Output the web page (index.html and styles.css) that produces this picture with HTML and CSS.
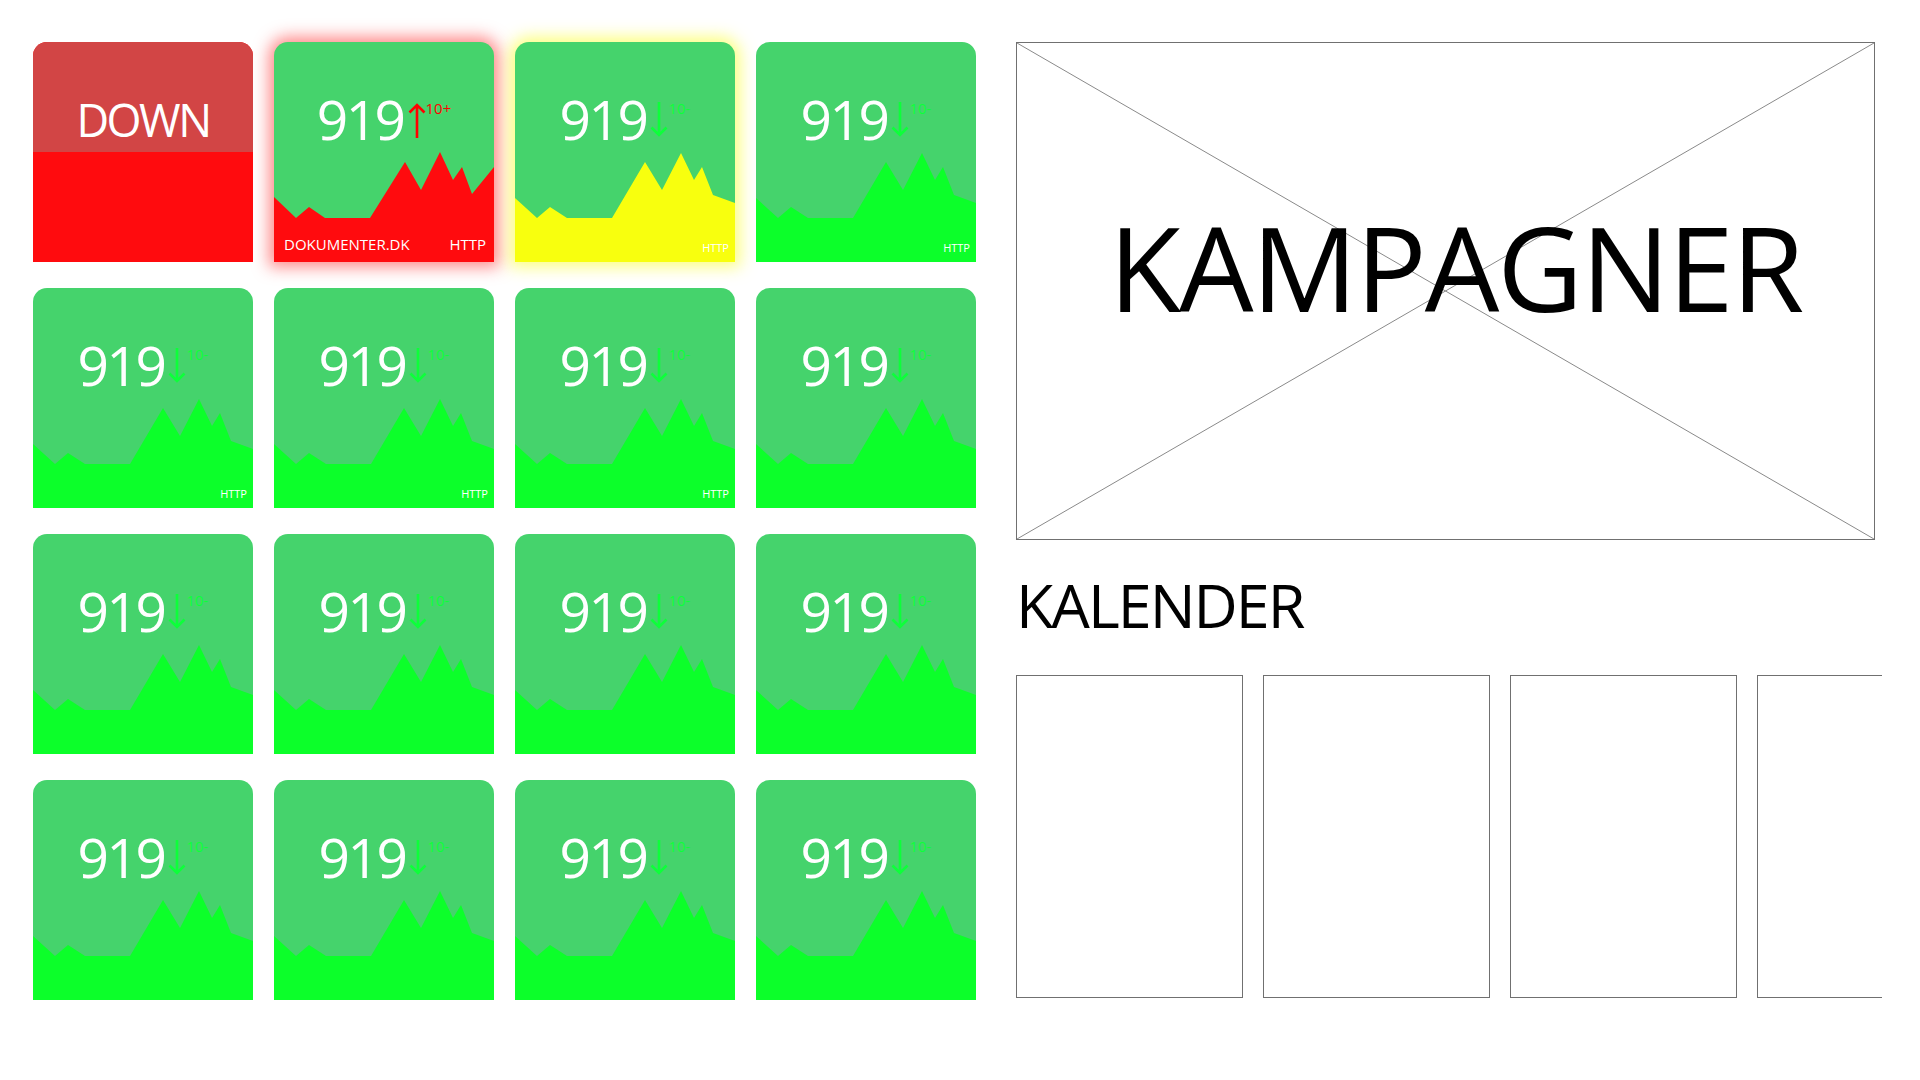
FILE: index.html
```html
<!DOCTYPE html>
<html lang="da">

<head>
    <meta charset="UTF-8" />
    <meta name="viewport" content="width=device-width, initial-scale=1.0" />
    <title>Status</title>
    <link rel="stylesheet" href="styles.css">
</head>

<body>

    <svg class="defs" width="0" height="0">
        <symbol id="arrow-up" viewBox="0 0 18 36">
            <path d="M9 3 V36 M1.5 10.5 L9 3 L16.5 10.5" fill="none" stroke="currentColor" stroke-width="2.6" />
        </symbol>
        <symbol id="arrow-down" viewBox="0 0 18 36">
            <path d="M9 0 V33 M1.5 25.5 L9 33 L16.5 25.5" fill="none" stroke="currentColor" stroke-width="2.6" />
        </symbol>
    </svg>

    <div class="dashboard">

        <div class="tiles">
            <div class="tile down">
                <div class="down-head">DOWN</div>
            </div>

            <div class="tile alert">
                <div class="chart spike"></div>
                <div class="value">
                    <span class="num">919</span>
                    <svg class="arrow"><use href="#arrow-up" /></svg>
                    <span class="delta">10+</span>
                </div>
                <div class="footer">
                    <span>DOKUMENTER.DK</span>
                    <span>HTTP</span>
                </div>
            </div>

            <div class="tile warn">
                <div class="chart"></div>
                <div class="value">
                    <span class="num">919</span>
                    <svg class="arrow"><use href="#arrow-down" /></svg>
                    <span class="delta">10-</span>
                </div>
                <span class="proto">HTTP</span>
            </div>

            <div class="tile">
                <div class="chart"></div>
                <div class="value">
                    <span class="num">919</span>
                    <svg class="arrow"><use href="#arrow-down" /></svg>
                    <span class="delta">10-</span>
                </div>
                <span class="proto">HTTP</span>
            </div>

            <div class="tile">
                <div class="chart"></div>
                <div class="value">
                    <span class="num">919</span>
                    <svg class="arrow"><use href="#arrow-down" /></svg>
                    <span class="delta">10-</span>
                </div>
                <span class="proto">HTTP</span>
            </div>

            <div class="tile">
                <div class="chart"></div>
                <div class="value">
                    <span class="num">919</span>
                    <svg class="arrow"><use href="#arrow-down" /></svg>
                    <span class="delta">10-</span>
                </div>
                <span class="proto">HTTP</span>
            </div>

            <div class="tile">
                <div class="chart"></div>
                <div class="value">
                    <span class="num">919</span>
                    <svg class="arrow"><use href="#arrow-down" /></svg>
                    <span class="delta">10-</span>
                </div>
                <span class="proto">HTTP</span>
            </div>

            <div class="tile">
                <div class="chart"></div>
                <div class="value">
                    <span class="num">919</span>
                    <svg class="arrow"><use href="#arrow-down" /></svg>
                    <span class="delta">10-</span>
                </div>
            </div>

            <div class="tile">
                <div class="chart"></div>
                <div class="value">
                    <span class="num">919</span>
                    <svg class="arrow"><use href="#arrow-down" /></svg>
                    <span class="delta">10-</span>
                </div>
            </div>

            <div class="tile">
                <div class="chart"></div>
                <div class="value">
                    <span class="num">919</span>
                    <svg class="arrow"><use href="#arrow-down" /></svg>
                    <span class="delta">10-</span>
                </div>
            </div>

            <div class="tile">
                <div class="chart"></div>
                <div class="value">
                    <span class="num">919</span>
                    <svg class="arrow"><use href="#arrow-down" /></svg>
                    <span class="delta">10-</span>
                </div>
            </div>

            <div class="tile">
                <div class="chart"></div>
                <div class="value">
                    <span class="num">919</span>
                    <svg class="arrow"><use href="#arrow-down" /></svg>
                    <span class="delta">10-</span>
                </div>
            </div>

            <div class="tile">
                <div class="chart"></div>
                <div class="value">
                    <span class="num">919</span>
                    <svg class="arrow"><use href="#arrow-down" /></svg>
                    <span class="delta">10-</span>
                </div>
            </div>

            <div class="tile">
                <div class="chart"></div>
                <div class="value">
                    <span class="num">919</span>
                    <svg class="arrow"><use href="#arrow-down" /></svg>
                    <span class="delta">10-</span>
                </div>
            </div>

            <div class="tile">
                <div class="chart"></div>
                <div class="value">
                    <span class="num">919</span>
                    <svg class="arrow"><use href="#arrow-down" /></svg>
                    <span class="delta">10-</span>
                </div>
            </div>

            <div class="tile">
                <div class="chart"></div>
                <div class="value">
                    <span class="num">919</span>
                    <svg class="arrow"><use href="#arrow-down" /></svg>
                    <span class="delta">10-</span>
                </div>
            </div>
        </div>

        <div class="side">
            <div class="campaign">
                <svg class="cross" viewBox="0 0 100 100" preserveAspectRatio="none">
                    <line x1="0" y1="0" x2="100" y2="100" />
                    <line x1="100" y1="0" x2="0" y2="100" />
                </svg>
                <span class="campaign-title">KAMPAGNER</span>
            </div>

            <h2 class="calendar-title">KALENDER</h2>

            <div class="calendar">
                <div class="day"></div>
                <div class="day"></div>
                <div class="day"></div>
                <div class="day"></div>
            </div>
        </div>

    </div>

</body>

</html>
```

FILE: styles.css
```css
body {
    margin: 0;
    font-family: "Open Sans", "Noto Sans", sans-serif;
    background: #fff;
    color: #000;
}

.defs {
    position: absolute;
}

.dashboard {
    display: flex;
    gap: 40px;
    padding: 42px 0 0 33px;
}

/* tiles */

.tiles {
    display: grid;
    grid-template-columns: repeat(4, 220px);
    grid-auto-rows: 220px;
    column-gap: 21px;
    row-gap: 26px;
}

.tile {
    position: relative;
    width: 220px;
    height: 220px;
    border-radius: 14px 14px 0 0;
    background: #45d36c;
    color: #fff;
    overflow: hidden;
}

.chart {
    position: absolute;
    inset: 0;
    background: #0cff2a;
    clip-path: polygon(0 156px, 22px 176px, 35px 165px, 52px 176px, 97px 176px, 130px 120px, 147px 148px, 166px 111px, 179px 138px, 187px 125px, 198px 153px, 220px 161px, 220px 220px, 0 220px);
}

.chart.spike {
    clip-path: polygon(0 155px, 22px 176px, 35px 165px, 51px 176px, 96px 176px, 131px 120px, 147px 148px, 166px 110px, 179px 138px, 188px 125px, 198px 152px, 220px 125px, 220px 220px, 0 220px);
}

.tile.alert {
    overflow: visible;
    box-shadow: 0 0 16px 5px rgba(255, 40, 40, 0.55);
}

.tile.alert .chart {
    background: #ff0b0e;
}

.tile.warn {
    overflow: visible;
    box-shadow: 0 0 16px 5px rgba(250, 255, 40, 0.6);
}

.tile.warn .chart {
    background: #f8ff0e;
}

.tile.down {
    background: #ff0b0e;
}

.down-head {
    height: 110px;
    box-sizing: border-box;
    padding-top: 55px;
    background: #d24545;
    text-align: center;
    font-size: 45px;
    line-height: 1;
    letter-spacing: -2.5px;
}

.value {
    position: relative;
    display: flex;
    justify-content: center;
    align-items: flex-start;
    padding-top: 49px;
    line-height: 1;
    color: #0dff3a;
}

.alert .value {
    color: #ff0000;
}

.num {
    font-size: 55px;
    letter-spacing: -2.5px;
    color: #fff;
}

.arrow {
    width: 18px;
    height: 36px;
    margin: 11px 0 0 4px;
}

.delta {
    margin-top: 10px;
    font-size: 15px;
}

.proto {
    position: absolute;
    right: 6px;
    bottom: 9px;
    font-size: 11px;
    line-height: 1;
}

.footer {
    position: absolute;
    left: 10px;
    right: 8px;
    bottom: 10px;
    display: flex;
    justify-content: space-between;
    font-size: 15px;
    line-height: 1;
}

/* right side */

.side {
    width: 866px;
    overflow: hidden;
}

.campaign {
    position: relative;
    width: 859px;
    height: 498px;
    box-sizing: border-box;
    border: 1px solid #707070;
    padding: 165px 0 0 20px;
    text-align: center;
}

.cross {
    position: absolute;
    inset: 0;
    width: 100%;
    height: 100%;
}

.cross line {
    stroke: #8a8a8a;
    stroke-width: 1;
    vector-effect: non-scaling-stroke;
}

.campaign-title {
    position: relative;
    font-size: 118px;
    line-height: 1;
    letter-spacing: -2px;
}

.calendar-title {
    margin: 34px 0 0;
    font-size: 61px;
    font-weight: 400;
    line-height: 1;
    letter-spacing: -2px;
}

.calendar {
    display: flex;
    gap: 20px;
    margin-top: 40px;
}

.day {
    flex: 0 0 227px;
    height: 323px;
    box-sizing: border-box;
    border: 1px solid #707070;
}
```
